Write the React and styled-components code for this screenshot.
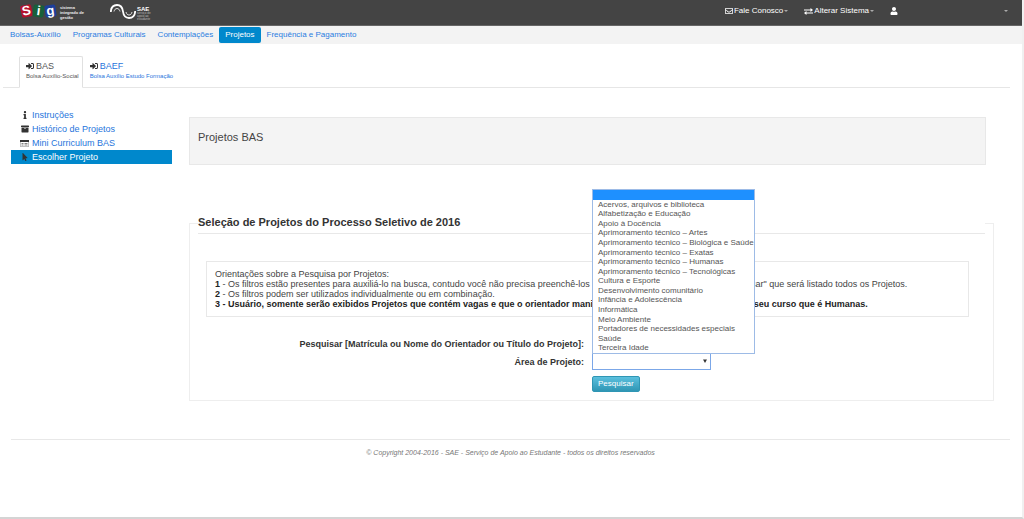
import React from "react";
import styled, { createGlobalStyle } from "styled-components";
import { FaRegEnvelope, FaUser, FaInfo, FaArchive, FaMousePointer, FaSignInAlt } from "react-icons/fa";

const menu = ["Bolsas-Auxílio", "Programas Culturais", "Contemplações", "Projetos", "Frequência e Pagamento"];

const tabs = [
  { title: "BAS", subtitle: "Bolsa Auxílio-Social", active: true },
  { title: "BAEF", subtitle: "Bolsa Auxílio Estudo Formação" },
];

const sideLinks = [
  { label: "Instruções", icon: <FaInfo /> },
  { label: "Histórico de Projetos", icon: <FaArchive /> },
  { label: "Mini Curriculum BAS", icon: <CardIcon /> },
  { label: "Escolher Projeto", icon: <FaMousePointer />, active: true },
];

const areas = [
  "",
  "Acervos, arquivos e biblioteca",
  "Alfabetização e Educação",
  "Apoio à Docência",
  "Aprimoramento técnico – Artes",
  "Aprimoramento técnico – Biológica e Saúde",
  "Aprimoramento técnico – Exatas",
  "Aprimoramento técnico – Humanas",
  "Aprimoramento técnico – Tecnológicas",
  "Cultura e Esporte",
  "Desenvolvimento comunitário",
  "Infância e Adolescência",
  "Informática",
  "Meio Ambiente",
  "Portadores de necessidades especiais",
  "Saúde",
  "Terceira Idade",
];

function CardIcon() {
  return (
    <svg viewBox="0 0 18 14" width="9" height="7" aria-hidden="true">
      <rect x="0.5" y="0.5" width="17" height="13" rx="1" fill="#fff" stroke="#555" />
      <path d="M0 2h18" stroke="#333" strokeWidth="4" />
      <path d="M3 7h4M3 10h4M9 7h6M9 10h6" stroke="#555" strokeWidth="1.5" />
    </svg>
  );
}

function ExchangeIcon() {
  return (
    <svg viewBox="0 0 18 14" width="9" height="7" aria-hidden="true">
      <path d="M0 3h13V0l5 4-5 4V5H0zM18 9H5V6l-5 4 5 4v-3h13z" fill="#fff" />
    </svg>
  );
}

function Caret() {
  return (
    <svg viewBox="0 0 8 4" width="4" height="2" aria-hidden="true">
      <path d="M0 0h8L4 4z" fill="#aaa" />
    </svg>
  );
}

function SigLogo() {
  return (
    <Logo href="#" aria-label="Sig">
      <LogoTile $color="#b5122d" $tilt="-12deg">S</LogoTile>
      <LogoTile $color="#17603a" $tilt="8deg">i</LogoTile>
      <LogoTile $color="#1d3f9b" $tilt="-8deg">g</LogoTile>
      <LogoText>
        sistema
        <br />
        integrado de
        <br />
        gestão
      </LogoText>
    </Logo>
  );
}

function SaeLogo() {
  return (
    <SaeLink href="#" aria-label="SAE">
      <svg viewBox="0 0 26 15" width="26" height="15" fill="none" stroke="#fff" strokeWidth="1.8">
        <path d="M0.8 8C1 3.5 3.5 1 7 1S12.5 3.5 13 7.5S15.5 14 19 14S25 11.5 25.2 7" />
        <path d="M4 7.5C4.5 5.5 5.5 4.5 7 4.5S9.5 5.5 10 7.5M16 8C16.5 10 17.5 11 19 11S21.5 10 22 8" strokeWidth="0.8" />
      </svg>
      <SaeText>
        <strong>SAE</strong>
        <small>
          serviço de
          <br />
          apoio ao
          <br />
          estudante
        </small>
      </SaeText>
    </SaeLink>
  );
}

function App() {
  return (
    <>
      <GlobalStyle />
      <Page>
        <TopBar>
          <SigLogo />
          <SaeLogo />
          <TopActions>
            <TopButton type="button">
              <FaRegEnvelope /> Fale Conosco <Caret />
            </TopButton>
            <TopButton type="button">
              <ExchangeIcon /> Alterar Sistema <Caret />
            </TopButton>
            <UserButton type="button" aria-label="Usuário">
              <FaUser />
              <Caret />
            </UserButton>
          </TopActions>
        </TopBar>
        <Menu>
          {menu.map((item) => (
            <MenuLink key={item} href="#" $active={item === "Projetos"}>
              {item}
            </MenuLink>
          ))}
        </Menu>
        <Tabs>
          {tabs.map((tab) => (
            <Tab key={tab.title} href="#" $active={tab.active}>
              <TabTitle>
                <FaSignInAlt /> {tab.title}
              </TabTitle>
              <TabSubtitle>{tab.subtitle}</TabSubtitle>
            </Tab>
          ))}
        </Tabs>
        <Columns>
          <Sidebar>
            {sideLinks.map((link) => (
              <SideLink key={link.label} href="#" $active={link.active}>
                <SideIcon>{link.icon}</SideIcon>
                {link.label}
              </SideLink>
            ))}
          </Sidebar>
          <Content>
            <Well>Projetos BAS</Well>
            <Fieldset>
              <Legend>Seleção de Projetos do Processo Seletivo de 2016</Legend>
              <Notice>
                <p>Orientações sobre a Pesquisa por Projetos:</p>
                <p>
                  <b>1</b> - Os filtros estão presentes para auxiliá-lo na busca, contudo você não precisa preenchê-los
                  para pesquisar. Basta clicar em "Pesquisar" que será listado todos os Projetos.
                </p>
                <p>
                  <b>2</b> - Os filtros podem ser utilizados individualmente ou em combinação.
                </p>
                <p>
                  <b>
                    3 - Usuário, somente serão exibidos Projetos que contém vagas e que o orientador manifetou interesse
                    em alunos da área de seu curso que é Humanas.
                  </b>
                </p>
              </Notice>
              <Form onSubmit={(e) => e.preventDefault()}>
                <Label htmlFor="busca">Pesquisar [Matrícula ou Nome do Orientador ou Título do Projeto]:</Label>
                <Input id="busca" type="text" />
                <Label htmlFor="area">Área de Projeto:</Label>
                <SelectBox>
                  <Select id="area" defaultValue="">
                    {areas.map((area) => (
                      <option key={area} value={area}>
                        {area}
                      </option>
                    ))}
                  </Select>
                  <SelectArrow viewBox="0 0 8 8" aria-hidden="true">
                    <path d="M0 1h8L4 8z" fill="#333" />
                  </SelectArrow>
                  <Options role="listbox" aria-label="Área de Projeto">
                    {areas.map((area) => (
                      <Option key={area} role="option" aria-selected={area === ""} $active={area === ""}>
                        {area}
                      </Option>
                    ))}
                  </Options>
                </SelectBox>
                <SubmitButton type="submit">Pesquisar</SubmitButton>
              </Form>
            </Fieldset>
          </Content>
        </Columns>
        <Footer>© Copyright 2004-2016 - SAE - Serviço de Apoio ao Estudante - todos os direitos reservados</Footer>
      </Page>
    </>
  );
}

const GlobalStyle = createGlobalStyle`
  * {
    box-sizing: border-box;
  }
  body {
    margin: 0;
    background: #fff;
    color: #444;
    font-family: "Liberation Sans", Arial, sans-serif;
    font-size: 9px;
    line-height: 10px;
  }
  a {
    color: #1f75dc;
    text-decoration: none;
  }
  p {
    margin: 0;
  }
  button, input, select {
    font-family: inherit;
  }
`;

const Page = styled.div`
  display: flex;
  flex-direction: column;
  min-height: 100vh;
  border-right: 2px solid #f0f0f0;
  border-bottom: 2px solid #d4d4d4;
`;

const TopBar = styled.header`
  display: flex;
  align-items: flex-start;
  height: 26px;
  padding: 4px 14px 0 21px;
  background: #444;
  border-bottom: 1px solid #666;
`;

const Logo = styled.a`
  display: flex;
  align-items: flex-start;
  gap: 1px;
  width: 89px;
  padding-top: 1px;
`;

const LogoTile = styled.span`
  width: 11px;
  height: 12px;
  border-radius: 2px;
  background: ${(props) => props.$color};
  color: #fff;
  font-size: 13px;
  font-weight: 700;
  line-height: 12px;
  text-align: center;
  transform: rotate(${(props) => props.$tilt});
`;

const LogoText = styled.span`
  padding-left: 3px;
  color: #eee;
  font-size: 4px;
  font-weight: 700;
  line-height: 5px;
  white-space: nowrap;
`;

const SaeLink = styled.a`
  display: flex;
  gap: 1px;
`;

const SaeText = styled.span`
  display: flex;
  flex-direction: column;
  padding-top: 2px;
  color: #fff;

  strong {
    font-size: 6px;
    line-height: 6px;
  }
  small {
    color: #bbb;
    font-size: 3px;
    line-height: 3px;
  }
`;

const TopActions = styled.div`
  display: flex;
  gap: 16px;
  margin-left: auto;
`;

const TopButton = styled.button`
  display: flex;
  align-items: center;
  gap: 1px;
  height: 14px;
  padding: 0;
  border: 0;
  background: none;
  color: #fff;
  font-size: 8px;
  line-height: 14px;
`;

const UserButton = styled(TopButton)`
  justify-content: space-between;
  width: 118px;
`;

const Menu = styled.nav`
  display: flex;
  height: 18px;
  padding: 1px 4px;
  background: #f3f3f3;
`;

const MenuLink = styled.a`
  height: 16px;
  padding: 0 6px;
  border-radius: 2px;
  background: ${(props) => (props.$active ? "#0088cc" : "none")};
  color: ${(props) => (props.$active ? "#fff" : "#2a7de1")};
  font-size: 8px;
  line-height: 16px;
`;

const Tabs = styled.nav`
  display: flex;
  height: 32px;
  margin: 12px 12px 0 3px;
  padding-left: 16px;
  border-bottom: 1px solid #e6e6e6;
`;

const Tab = styled.a`
  height: 32px;
  padding: 4px 3px 0 6px;
  border: 1px solid ${(props) => (props.$active ? "#e0e0e0" : "transparent")};
  border-bottom-color: ${(props) => (props.$active ? "#fff" : "transparent")};
  border-radius: 2px 2px 0 0;
  color: ${(props) => (props.$active ? "#555" : "#1f75dc")};
`;

const TabTitle = styled.span`
  display: flex;
  align-items: center;
  gap: 2px;
  font-size: 9px;
  line-height: 10px;

  svg {
    color: #333;
    font-size: 8px;
  }
`;

const TabSubtitle = styled.span`
  display: block;
  font-size: 6px;
  line-height: 10px;
`;

const Columns = styled.div`
  display: flex;
  gap: 17px;
  padding: 20px 28px 0 11px;
`;

const Sidebar = styled.nav`
  flex: 0 0 161px;
`;

const SideLink = styled.a`
  display: flex;
  align-items: center;
  gap: 3px;
  height: 14px;
  padding-left: 9px;
  background: ${(props) => (props.$active ? "#0088cc" : "none")};
  color: ${(props) => (props.$active ? "#fff" : "#1f75dc")};
`;

const SideIcon = styled.span`
  display: flex;
  justify-content: center;
  width: 9px;
  color: #333;
  font-size: 8px;
`;

const Content = styled.main`
  flex: 1;
  min-width: 0;
  padding-top: 9px;
`;

const Well = styled.div`
  height: 48px;
  margin-right: 8px;
  padding: 13px 8px;
  border: 1px solid #e8e8e8;
  background: #f4f4f4;
  font-size: 11px;
  line-height: 12px;
`;

const Fieldset = styled.fieldset`
  margin: 47px 0 0;
  padding: 27px 8px 8px;
  border: 1px solid #eee;
`;

const Legend = styled.legend`
  width: 100%;
  padding: 0 0 1px;
  border-bottom: 1px solid #e8e8e8;
  color: #333;
  font-size: 11px;
  font-weight: 700;
  line-height: 20px;
`;

const Notice = styled.div`
  height: 56px;
  margin: 0 16px 0 8px;
  padding: 7px 8px;
  border: 1px solid #e8e8e8;
  white-space: nowrap;

  b {
    color: #222;
  }
`;

const Form = styled.form`
  display: grid;
  grid-template-columns: 386px auto;
  gap: 1px 8px;
  justify-items: start;
  align-items: center;
  margin-top: 18px;
`;

const Label = styled.label`
  justify-self: end;
  color: #333;
  font-weight: 700;
`;

const Input = styled.input`
  width: 118px;
  height: 17px;
  border: 1px solid #ccc;
  font-size: 8px;
`;

const SelectBox = styled.div`
  position: relative;
  width: 119px;
`;

const Select = styled.select`
  display: block;
  width: 100%;
  height: 17px;
  border: 1px solid #7ba7e8;
  background: #fff;
  font-size: 8px;
  appearance: none;
`;

const SelectArrow = styled.svg`
  position: absolute;
  top: 6px;
  right: 4px;
  width: 4px;
  height: 4px;
`;

const Options = styled.ul`
  position: absolute;
  bottom: 16px;
  left: 0;
  display: grid;
  grid-auto-rows: 1fr;
  min-width: 157px;
  height: 165px;
  margin: 0;
  padding: 0;
  border: 1px solid #9dbbe6;
  background: #fff;
  list-style: none;
`;

const Option = styled.li`
  padding-left: 5px;
  background: ${(props) => (props.$active ? "#1e90ff" : "#fff")};
  color: #555;
  font-size: 8px;
  line-height: 10px;
  min-height: 0;
  white-space: nowrap;
`;

const SubmitButton = styled.button`
  grid-column: 2;
  height: 16px;
  margin-top: 5px;
  padding: 0 5px;
  border: 1px solid #2f96b4;
  border-radius: 2px;
  background: linear-gradient(#5bc0de, #2f96b4);
  color: #fff;
  font-size: 8px;
  line-height: 14px;
`;

const Footer = styled.footer`
  margin: 38px 12px 0 11px;
  padding-top: 8px;
  border-top: 1px solid #e8e8e8;
  color: #777;
  font-size: 7px;
  font-style: italic;
  text-align: center;
`;

export default App;
